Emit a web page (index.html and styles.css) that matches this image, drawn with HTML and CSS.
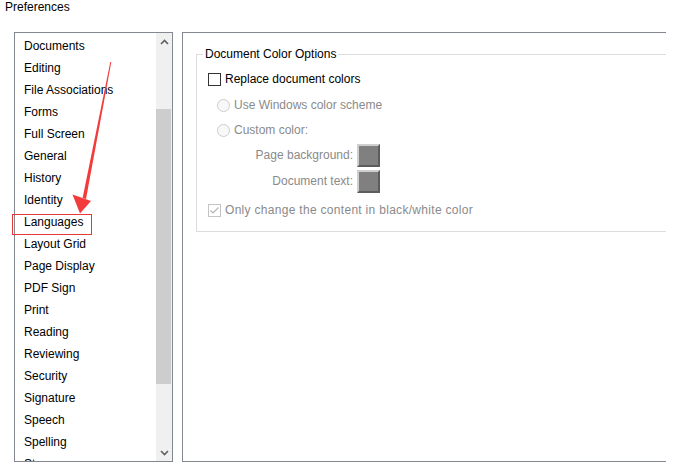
FILE: index.html
```html
<!DOCTYPE html>
<html>
<head>
<meta charset="utf-8">
<link rel="stylesheet" href="styles.css">
</head>
<body>
<div class="window">
  <div class="title">Preferences</div>
  <div class="main">
    <div class="listbox">
      <ul class="items">
        <li>Documents</li>
        <li>Editing</li>
        <li>File Associations</li>
        <li>Forms</li>
        <li>Full Screen</li>
        <li>General</li>
        <li>History</li>
        <li>Identity</li>
        <li>Languages</li>
        <li>Layout Grid</li>
        <li>Page Display</li>
        <li>PDF Sign</li>
        <li>Print</li>
        <li>Reading</li>
        <li>Reviewing</li>
        <li>Security</li>
        <li>Signature</li>
        <li>Speech</li>
        <li>Spelling</li>
        <li>Stamps</li>
      </ul>
      <div class="scrollbar">
        <div class="sb-btn"><svg width="9" height="6" viewBox="0 0 9 6"><polyline points="1,5 4.5,1.5 8,5" fill="none" stroke="#606060" stroke-width="1.6"/></svg></div>
        <div class="track"><div class="thumb"></div></div>
        <div class="sb-btn"><svg width="9" height="6" viewBox="0 0 9 6"><polyline points="1,1 4.5,4.5 8,1" fill="none" stroke="#606060" stroke-width="1.6"/></svg></div>
      </div>
    </div>
    <div class="panel">
      <fieldset class="group">
        <legend>Document Color Options</legend>
        <div class="row"><span class="cb"></span><span>Replace document colors</span></div>
        <div class="row radio"><span class="rb"></span><span class="dis">Use Windows color scheme</span></div>
        <div class="row radio short"><span class="rb"></span><span class="dis">Custom color:</span></div>
        <div class="row swrow"><span class="swlabel dis">Page background:</span><span class="swatch"></span></div>
        <div class="row swrow"><span class="swlabel dis">Document text:</span><span class="swatch"></span></div>
        <div class="row last"><span class="cb cb-dis"><svg width="11" height="11" viewBox="0 0 11 11"><polyline points="1.5,5.5 4,8 9.5,2.5" fill="none" stroke="#b4b4b4" stroke-width="1.2"/></svg></span><span class="dis wide">Only change the content in black/white color</span></div>
      </fieldset>
    </div>
  </div>
  <svg class="annot" width="679" height="468" viewBox="0 0 679 468">
    <rect x="12.5" y="214.5" width="79" height="20" fill="none" stroke="#e53935" stroke-width="1"/>
    <polygon points="110.3,62 111.3,62 86,199 82.6,198" fill="#f23b3b"/>
    <polygon points="72.5,194.5 91,201 80,213.5" fill="#f23b3b"/>
  </svg>
</div>
</body>
</html>
```
FILE: styles.css
```css
html, body {
  margin: 0;
  padding: 0;
  background: #ffffff;
}
body {
  font-family: "Liberation Sans", Arial, sans-serif;
  font-size: 12px;
  color: #000;
}
.window {
  position: relative;
  width: 679px;
  height: 468px;
  overflow: hidden;
}
.title {
  height: 32px;
  line-height: 14px;
  padding-left: 5px;
  box-sizing: border-box;
}
.main {
  display: flex;
  gap: 9px;
  padding-left: 14px;
  height: 430px;
}
.listbox {
  width: 159px;
  height: 430px;
  box-sizing: border-box;
  border: 1px solid #828790;
  display: flex;
}
.items {
  flex: 1;
  list-style: none;
  margin: 0;
  padding: 2px 0 0 9px;
  overflow: hidden;
}
.items li {
  height: 22px;
  line-height: 22px;
  white-space: nowrap;
}
.scrollbar {
  width: 16px;
  background: #f0f0f0;
  display: flex;
  flex-direction: column;
}
.sb-btn {
  height: 17px;
  display: flex;
  align-items: center;
  justify-content: center;
}
.track {
  flex: 1;
}
.thumb {
  margin-top: 59px;
  height: 275px;
  width: 15px;
  background: #cdcdcd;
}
.panel {
  width: 484px;
  height: 430px;
  box-sizing: border-box;
  border: 1px solid #828790;
  border-right: none;
  padding: 14px 0 0 13px;
}
.group {
  margin: 0;
  border: 1px solid #dcdcdc;
  border-right: none;
  padding: 5px 0 8px 11px;
  min-width: 0;
}
.group legend {
  margin-left: -5px;
  padding: 0 2px;
  line-height: 14px;
}
.row {
  height: 26px;
  display: flex;
  align-items: center;
  gap: 4px;
  white-space: nowrap;
}
.radio {
  padding-left: 9px;
}
.short {
  height: 24px;
}
.last {
  margin-top: 3px;
}
.wide {
  letter-spacing: 0.3px;
}
.cb {
  width: 13px;
  height: 13px;
  box-sizing: border-box;
  border: 1px solid #333333;
  background: #fff;
  display: flex;
  align-items: center;
  justify-content: center;
}
.cb-dis {
  border-color: #c4c4c4;
}
.rb {
  width: 13px;
  height: 13px;
  box-sizing: border-box;
  border: 1px solid #cccccc;
  border-radius: 50%;
  background: #f8f8f8;
}
.dis {
  color: #8a8a8a;
}
.swlabel {
  width: 145px;
  text-align: right;
}
.swatch {
  width: 23px;
  height: 23px;
  box-sizing: border-box;
  background: #808080;
  border-style: solid;
  border-width: 2px;
  border-color: #cfcfcf #5c5c5c #5c5c5c #cfcfcf;
}
.annot {
  position: absolute;
  left: 0;
  top: 0;
  pointer-events: none;
}
```
